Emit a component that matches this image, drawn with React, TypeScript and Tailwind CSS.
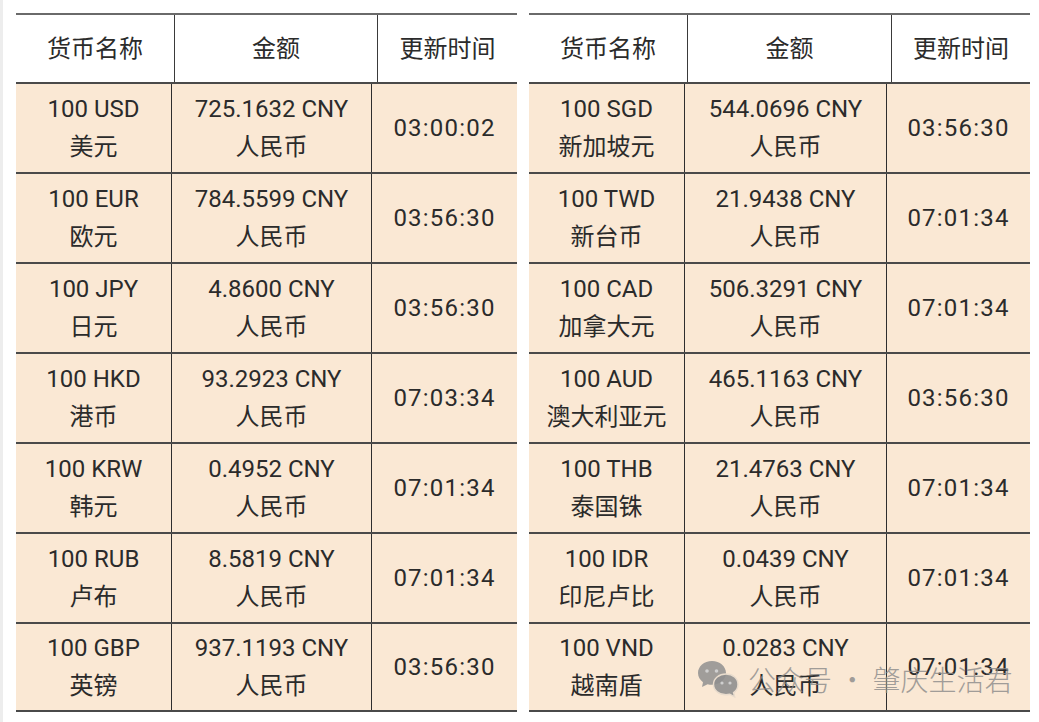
import React from "react";

type Row = { code: string; name: string; amount: string; time: string };

const left: Row[] = [
  { code: "100 USD", name: "美元", amount: "725.1632 CNY", time: "03:00:02" },
  { code: "100 EUR", name: "欧元", amount: "784.5599 CNY", time: "03:56:30" },
  { code: "100 JPY", name: "日元", amount: "4.8600 CNY", time: "03:56:30" },
  { code: "100 HKD", name: "港币", amount: "93.2923 CNY", time: "07:03:34" },
  { code: "100 KRW", name: "韩元", amount: "0.4952 CNY", time: "07:01:34" },
  { code: "100 RUB", name: "卢布", amount: "8.5819 CNY", time: "07:01:34" },
  { code: "100 GBP", name: "英镑", amount: "937.1193 CNY", time: "03:56:30" },
];

const right: Row[] = [
  { code: "100 SGD", name: "新加坡元", amount: "544.0696 CNY", time: "03:56:30" },
  { code: "100 TWD", name: "新台币", amount: "21.9438 CNY", time: "07:01:34" },
  { code: "100 CAD", name: "加拿大元", amount: "506.3291 CNY", time: "07:01:34" },
  { code: "100 AUD", name: "澳大利亚元", amount: "465.1163 CNY", time: "03:56:30" },
  { code: "100 THB", name: "泰国铢", amount: "21.4763 CNY", time: "07:01:34" },
  { code: "100 IDR", name: "印尼卢比", amount: "0.0439 CNY", time: "07:01:34" },
  { code: "100 VND", name: "越南盾", amount: "0.0283 CNY", time: "07:01:34" },
];

function Table({ rows, hw, bw }: { rows: Row[]; hw: [string, string]; bw: [string, string] }) {
  return (
    <div className="w-[501px] flex flex-col">
      <div className="h-[69px] flex border-t-2 border-[#6a6a6a] bg-white">
        <div className={`${hw[0]} flex items-center justify-center border-r border-[#3a3a3a]`}>货币名称</div>
        <div className={`${hw[1]} flex items-center justify-center border-r border-[#3a3a3a]`}>金额</div>
        <div className="flex-1 flex items-center justify-center">更新时间</div>
      </div>
      {rows.map((r, i) => (
        <div
          key={r.code}
          className={`h-[90px] flex border-t-2 border-[#4a4a4a] bg-[#fae8d4] ${i === rows.length - 1 ? "border-b-2" : ""}`}
        >
          <div className={`${bw[0]} flex flex-col items-center justify-center leading-[38px] border-r border-[#2e2e2e]`}>
            <span>{r.code}</span>
            <span>{r.name}</span>
          </div>
          <div className={`${bw[1]} flex flex-col items-center justify-center leading-[38px] border-r border-[#2e2e2e]`}>
            <span>{r.amount}</span>
            <span>人民币</span>
          </div>
          <div className="flex-1 flex items-center justify-center tracking-[1.2px]">{r.time}</div>
        </div>
      ))}
    </div>
  );
}

export default function App() {
  return (
    <div className="w-[1039px] h-[722px] bg-white relative flex overflow-hidden text-[24px] text-[#2b2b2b] font-[Roboto,'Noto_Sans_CJK_SC',sans-serif]">
      <div className="w-[3px] h-full bg-[#ededed]" />
      <div className="flex gap-[12px] pl-[13px] pt-[13px]">
        <Table rows={left} hw={["w-[159px]", "w-[203px]"]} bw={["w-[156px]", "w-[200px]"]} />
        <Table rows={right} hw={["w-[159px]", "w-[204px]"]} bw={["w-[156px]", "w-[202px]"]} />
      </div>
      <div className="absolute left-[696px] top-[658px] flex items-center gap-[6px] pointer-events-none">
        <svg width="46" height="40" viewBox="0 0 46 40">
          <path d="M16 2C8 2 2 7.5 2 14c0 3.8 2 7 5 9.2L6 28l5.6-2.8c1.4.4 2.9.6 4.4.6 7.8 0 14-5.3 14-11.8S23.8 2 16 2z" fill="#8f8f8f" fillOpacity="0.85" />
          <circle cx="11" cy="12" r="1.8" fill="#cfcfcf" />
          <circle cx="20.5" cy="12" r="1.8" fill="#cfcfcf" />
          <path d="M30 15c-7 0-12.5 4.6-12.5 10.4S23 35.8 30 35.8c1.3 0 2.6-.2 3.8-.5l4.8 2.5-1-4.2c2.7-1.9 4.4-4.7 4.4-8.2C42 19.6 37 15 30 15z" fill="#8f8f8f" fillOpacity="0.9" stroke="#e9dccd" strokeWidth="1.5" />
          <circle cx="26" cy="24" r="1.6" fill="#cfcfcf" />
          <circle cx="34" cy="24" r="1.6" fill="#cfcfcf" />
        </svg>
        <span className="text-[28px] text-[#8a8a8a] opacity-80 font-['Noto_Sans_CJK_SC',sans-serif] font-light whitespace-nowrap">
          公众号 · 肇庆生活君
        </span>
      </div>
    </div>
  );
}
